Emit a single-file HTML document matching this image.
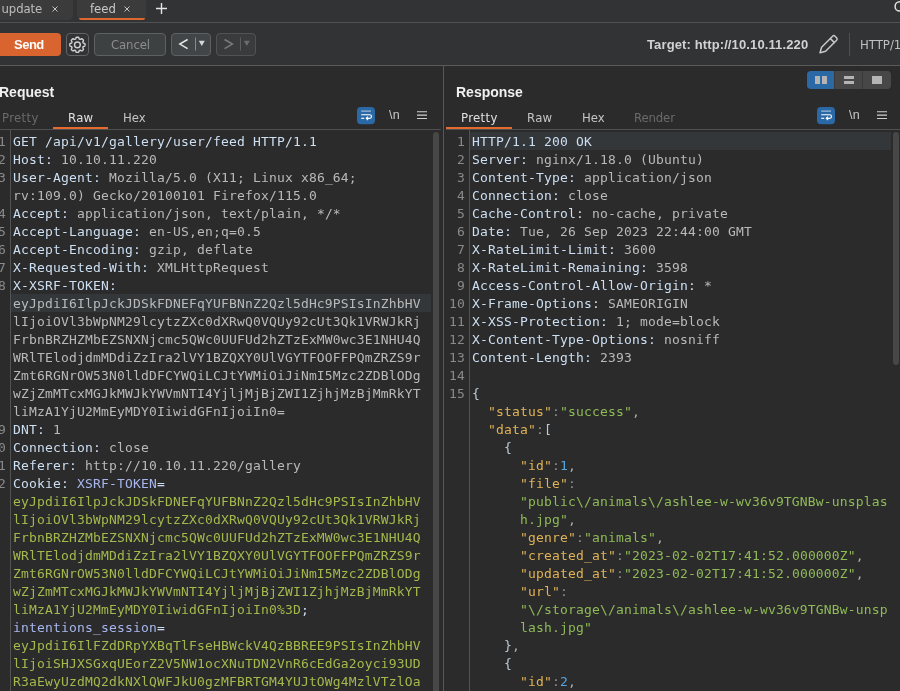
<!DOCTYPE html>
<html lang="en">
<head>
<meta charset="utf-8">
<title>Burp Suite Repeater</title>
<style>
*{box-sizing:border-box;margin:0;padding:0}
html,body{width:900px;height:691px;overflow:hidden;background:#2b2b2b}
#root{position:absolute;left:0;top:0;width:900px;height:691px;will-change:transform;overflow:hidden}
body{position:relative;font-family:"DejaVu Sans Condensed","Liberation Sans",sans-serif;font-size:13px;color:#d6d6d6}
.abs{position:absolute}
.b{font-family:"Liberation Sans",sans-serif;font-weight:bold}
#tabbar{left:0;top:0;width:900px;height:22px;background:#323334}
.tab{top:-4px;height:24px;background:#3b3b3c;border-radius:5px}
#tabline{left:0;top:22px;width:900px;height:1px;background:#515151}
#toolbar{left:0;top:23px;width:900px;height:42px;background:#323334}
#toolline{left:0;top:65px;width:900px;height:1px;background:#5a5a5a}
.t{position:absolute;white-space:pre;line-height:16px}
.btn{position:absolute;top:33px;height:23px;border:1px solid #5e6162;border-radius:4px;background:#3e4142}
#send{left:-4px;top:33px;width:65px;height:23px;background:#d9642f;border-radius:4px}
.ed{position:absolute;top:130px;bottom:0;background:#2b2b2b;overflow:hidden;font-family:"DejaVu Sans Mono","Liberation Mono",monospace;font-size:13px;letter-spacing:0.17px;line-height:18px;white-space:pre}
.ln{position:absolute;top:3px;color:#8a8a8a;text-align:right}
.tx{position:absolute;top:3px}
.hl{position:absolute;height:18px;background:#33373a}
.gl{position:absolute;top:0;bottom:0;width:1px;background:#535353}
.sb{position:absolute;width:6px;border-radius:3px;background:#474747}
.h{color:#cddff2}.v{color:#b9b9b9}.p{color:#a7b6ee}.g{color:#a3b94d}
.k{color:#dfb257}.s{color:#8fba58}.n{color:#58a6e0}.pu{color:#bccad8}.c{color:#8e8e8e}.cm{color:#adadad}
</style>
</head>
<body>
<div id="root">
<!-- top tab bar -->
<div class="abs" id="tabbar"></div>
<div class="abs" id="tabline"></div>
<div class="abs" id="toolbar"></div>
<div class="abs" id="toolline"></div>
<div class="abs tab" style="left:-4px;width:77px"></div>
<div class="t" style="left:1.5px;top:1px;color:#bdbdbd;letter-spacing:-0.1px">update</div>
<svg class="abs" style="left:51px;top:5px" width="8" height="8" viewBox="0 0 8 8"><path d="M1.5 1.5 L6.5 6.5 M6.5 1.5 L1.5 6.5" stroke="#c4c4c4" stroke-width="1" fill="none"/></svg>
<div class="abs tab" style="left:77px;width:69px"></div>
<div class="abs" style="left:79px;top:18px;width:66px;height:2px;background:#e0672f;border-radius:0 0 2px 2px"></div>
<div class="t" style="left:90px;top:1px;color:#c8c8c8">feed</div>
<svg class="abs" style="left:123px;top:5px" width="8" height="8" viewBox="0 0 8 8"><path d="M1.5 1.5 L6.5 6.5 M6.5 1.5 L1.5 6.5" stroke="#c4c4c4" stroke-width="1" fill="none"/></svg>
<svg class="abs" style="left:155px;top:2px" width="13" height="13" viewBox="0 0 13 13"><path d="M6.5 1 V12 M1 6.5 H12" stroke="#e4e4e4" stroke-width="1.4" fill="none"/></svg>
<svg class="abs" style="left:886px;top:0px" width="14" height="16" viewBox="0 0 14 16"><circle cx="13.7" cy="6.4" r="4.6" stroke="#e0e0e0" stroke-width="1.5" fill="none"/></svg>

<!-- toolbar -->
<div class="abs" id="send"></div>
<div class="t b" style="left:14px;top:37px;color:#fff;font-size:13px;letter-spacing:-0.5px">Send</div>
<div class="btn" style="left:66px;width:23px;background:transparent;border-color:#636363"></div>
<svg class="abs" style="left:68px;top:35px" width="19" height="19" viewBox="0 0 19 19"><g fill="none" stroke="#d2d2d2" stroke-width="1.45" stroke-linejoin="round"><circle cx="9.4" cy="9.8" r="2.9"/><path d="M17.00 9.80 L16.99 10.10 L16.97 10.40 L16.91 10.69 L16.79 10.97 L16.47 11.21 L15.91 11.36 L15.45 11.51 L15.22 11.69 L15.09 11.90 L14.99 12.12 L14.91 12.34 L14.85 12.58 L14.89 12.87 L15.11 13.30 L15.39 13.80 L15.45 14.20 L15.34 14.48 L15.17 14.73 L14.98 14.96 L14.77 15.17 L14.56 15.38 L14.33 15.57 L14.08 15.74 L13.80 15.85 L13.40 15.79 L12.90 15.51 L12.47 15.29 L12.18 15.25 L11.94 15.31 L11.72 15.39 L11.50 15.49 L11.29 15.62 L11.11 15.85 L10.96 16.31 L10.81 16.87 L10.57 17.19 L10.29 17.31 L10.00 17.37 L9.70 17.39 L9.40 17.40 L9.10 17.39 L8.80 17.37 L8.51 17.31 L8.23 17.19 L7.99 16.87 L7.84 16.31 L7.69 15.85 L7.51 15.62 L7.30 15.49 L7.08 15.39 L6.86 15.31 L6.62 15.25 L6.33 15.29 L5.90 15.51 L5.40 15.79 L5.00 15.85 L4.72 15.74 L4.47 15.57 L4.24 15.38 L4.03 15.17 L3.82 14.96 L3.63 14.73 L3.46 14.48 L3.35 14.20 L3.41 13.80 L3.69 13.30 L3.91 12.87 L3.95 12.58 L3.89 12.34 L3.81 12.12 L3.71 11.90 L3.58 11.69 L3.35 11.51 L2.89 11.36 L2.33 11.21 L2.01 10.97 L1.89 10.69 L1.83 10.40 L1.81 10.10 L1.80 9.80 L1.81 9.50 L1.83 9.20 L1.89 8.91 L2.01 8.63 L2.33 8.39 L2.89 8.24 L3.35 8.09 L3.58 7.91 L3.71 7.70 L3.81 7.48 L3.89 7.26 L3.95 7.02 L3.91 6.73 L3.69 6.30 L3.41 5.80 L3.35 5.40 L3.46 5.12 L3.63 4.87 L3.82 4.64 L4.03 4.43 L4.24 4.22 L4.47 4.03 L4.72 3.86 L5.00 3.75 L5.40 3.81 L5.90 4.09 L6.33 4.31 L6.62 4.35 L6.86 4.29 L7.08 4.21 L7.30 4.11 L7.51 3.98 L7.69 3.75 L7.84 3.29 L7.99 2.73 L8.23 2.41 L8.51 2.29 L8.80 2.23 L9.10 2.21 L9.40 2.20 L9.70 2.21 L10.00 2.23 L10.29 2.29 L10.57 2.41 L10.81 2.73 L10.96 3.29 L11.11 3.75 L11.29 3.98 L11.50 4.11 L11.72 4.21 L11.94 4.29 L12.18 4.35 L12.47 4.31 L12.90 4.09 L13.40 3.81 L13.80 3.75 L14.08 3.86 L14.33 4.03 L14.56 4.22 L14.77 4.43 L14.98 4.64 L15.17 4.87 L15.34 5.12 L15.45 5.40 L15.39 5.80 L15.11 6.30 L14.89 6.73 L14.85 7.02 L14.91 7.26 L14.99 7.48 L15.09 7.70 L15.22 7.91 L15.45 8.09 L15.91 8.24 L16.47 8.39 L16.79 8.63 L16.91 8.91 L16.97 9.20 L16.99 9.50 Z"/></g></svg>
<div class="btn" style="left:94px;width:72px"></div>
<div class="t" style="left:111px;top:37px;color:#8c8c8c;letter-spacing:-0.12px">Cancel</div>
<div class="btn" style="left:171px;width:40px;background:#424547"></div>
<svg class="abs" style="left:171px;top:33px" width="40" height="23" viewBox="0 0 40 23"><path d="M16.6 6.5 L8.8 11.1 L16.6 15.7" stroke="#e6e6e6" stroke-width="1.5" fill="none"/><path d="M24.5 4.5 V17.5" stroke="#8a8a8a" stroke-width="1"/><path d="M27.8 7.7 H33.8 L30.8 12.9 Z" fill="#d6d6d6"/></svg>
<div class="btn" style="left:216px;width:40px;background:#393b3d;border-color:#505355"></div>
<svg class="abs" style="left:216px;top:33px" width="40" height="23" viewBox="0 0 40 23"><path d="M8.6 6.5 L16.4 11.1 L8.6 15.7" stroke="#7c7c7c" stroke-width="1.5" fill="none"/><path d="M24.5 4.5 V17.5" stroke="#5e5e5e" stroke-width="1"/><path d="M27.8 7.7 H33.8 L30.8 12.9 Z" fill="#6c6c6c"/></svg>
<div class="t b" style="left:647px;top:37px;color:#d2d2d2;letter-spacing:0.12px">Target: http://10.10.11.220</div>
<svg class="abs" style="left:817px;top:33px" width="23" height="23" viewBox="0 0 23 23"><g fill="none" stroke="#c8c8c8" stroke-width="1.5" stroke-linejoin="round" stroke-linecap="round"><path d="M3 19.8 L4.6 14.2 L15.6 3.2 Q16.8 2 18 3.2 L19.6 4.8 Q20.8 6 19.6 7.2 L8.6 18.2 Z"/><path d="M13.4 5.6 L17.2 9.4"/></g></svg>
<div class="abs" style="left:849px;top:33px;width:1px;height:23px;background:#505050"></div>
<div class="t" style="left:860px;top:37px;color:#c0c0c0">HTTP/1</div>

<!-- panel headers -->
<div class="abs" style="left:443px;top:66px;width:1px;height:625px;background:#585858"></div>
<div class="t b" style="left:-1px;top:84px;font-size:14px;color:#f0f0f0">Request</div>
<div class="t b" style="left:456px;top:84px;font-size:14px;color:#f0f0f0">Response</div>
<div class="t" style="left:2px;top:110px;color:#6a6a6a;letter-spacing:0.35px">Pretty</div>
<div class="t" style="left:68px;top:110px;color:#e0e0e0;letter-spacing:0.3px">Raw</div>
<div class="t" style="left:123px;top:110px;color:#c4c4c4">Hex</div>
<div class="abs" style="left:53px;top:127px;width:55px;height:2px;background:#e46a2e"></div>
<div class="abs" style="left:0;top:129px;width:441px;height:1px;background:#505050"></div>
<div class="t" style="left:461px;top:110px;color:#e0e0e0;letter-spacing:0.35px">Pretty</div>
<div class="t" style="left:527px;top:110px;color:#c4c4c4;letter-spacing:0.3px">Raw</div>
<div class="t" style="left:582px;top:110px;color:#c4c4c4">Hex</div>
<div class="t" style="left:634px;top:110px;color:#6a6a6a;letter-spacing:-0.12px">Render</div>
<div class="abs" style="left:446px;top:127px;width:66px;height:2px;background:#e46a2e"></div>
<div class="abs" style="left:446px;top:129px;width:454px;height:1px;background:#505050"></div>

<!-- view toggle -->
<div class="abs" style="left:807px;top:71px;width:84px;height:18px;border-radius:4px;background:#3a3a3a;overflow:hidden">
<div class="abs" style="left:0;top:0;width:27px;height:18px;background:#2b68a6"></div>
<div class="abs" style="left:28px;top:0;width:27px;height:18px;background:#474747"></div>
<div class="abs" style="left:56px;top:0;width:28px;height:18px;background:#474747"></div>
<div class="abs" style="left:8px;top:5px;width:5px;height:8px;background:#b4b4b4"></div>
<div class="abs" style="left:15px;top:5px;width:5px;height:8px;background:#b4b4b4"></div>
<div class="abs" style="left:37px;top:5px;width:10px;height:3px;background:#b4b4b4"></div>
<div class="abs" style="left:37px;top:10px;width:10px;height:3px;background:#b4b4b4"></div>
<div class="abs" style="left:65px;top:5px;width:10px;height:8px;background:#b4b4b4"></div>
</div>

<!-- editor toolbar icons: request -->
<svg class="abs" style="left:357px;top:107px" width="18" height="18" viewBox="0 0 18 18"><rect x="0" y="0" width="18" height="17.3" rx="4" fill="#2b68a6"/><g fill="none" stroke-width="1.15"><path d="M4.2 4.1 H14" stroke="#a9c3de"/><path d="M4.2 7.7 H12.6 Q14.5 7.7 14.5 9.5 Q14.5 11.3 12.6 11.3 H9.6" stroke="#fff"/><path d="M11 9.6 L9.3 11.3 L11 13" stroke="#fff"/><path d="M4.2 11.3 H7.2" stroke="#fff"/></g></svg>
<div class="t" style="left:389px;top:107px;color:#c8c8c8;font-size:12.5px;font-family:'Liberation Sans',sans-serif;letter-spacing:0.3px">\n</div>
<svg class="abs" style="left:417px;top:110px" width="10" height="10" viewBox="0 0 10 10"><path d="M0 1.7 H10 M0 5.1 H10 M0 8.5 H10" stroke="#cfcfcf" stroke-width="1.15"/></svg>
<!-- editor toolbar icons: response -->
<svg class="abs" style="left:817px;top:107px" width="18" height="18" viewBox="0 0 18 18"><rect x="0" y="0" width="18" height="17.3" rx="4" fill="#2b68a6"/><g fill="none" stroke-width="1.15"><path d="M4.2 4.1 H14" stroke="#a9c3de"/><path d="M4.2 7.7 H12.6 Q14.5 7.7 14.5 9.5 Q14.5 11.3 12.6 11.3 H9.6" stroke="#fff"/><path d="M11 9.6 L9.3 11.3 L11 13" stroke="#fff"/><path d="M4.2 11.3 H7.2" stroke="#fff"/></g></svg>
<div class="t" style="left:849px;top:107px;color:#c8c8c8;font-size:12.5px;font-family:'Liberation Sans',sans-serif;letter-spacing:0.3px">\n</div>
<svg class="abs" style="left:877px;top:110px" width="10" height="10" viewBox="0 0 10 10"><path d="M0 1.7 H10 M0 5.1 H10 M0 8.5 H10" stroke="#cfcfcf" stroke-width="1.15"/></svg>

<!-- REQUEST EDITOR -->
<div class="ed" id="req" style="left:0;width:441px">
<div class="hl" style="left:11px;width:420px;top:164px"></div>
<div class="gl" style="left:10px"></div>
<div class="sb" style="left:433px;top:2px;height:570px"></div>
<div class="ln" style="left:-16px;width:22px">1
2
3

4
5
6
7
8







9
10
11
12</div>
<div class="tx" style="left:13px" id="reqtx"><span class="h">GET /api/v1/gallery/user/feed HTTP/1.1</span>
<span class="h">Host:</span><span class="v"> 10.10.11.220</span>
<span class="h">User-Agent:</span><span class="v"> Mozilla/5.0 (X11; Linux x86_64;
rv:109.0) Gecko/20100101 Firefox/115.0</span>
<span class="h">Accept:</span><span class="v"> application/json, text/plain, */*</span>
<span class="h">Accept-Language:</span><span class="v"> en-US,en;q=0.5</span>
<span class="h">Accept-Encoding:</span><span class="v"> gzip, deflate</span>
<span class="h">X-Requested-With:</span><span class="v"> XMLHttpRequest</span>
<span class="h">X-XSRF-TOKEN:</span>
<span class="v">eyJpdiI6IlpJckJDSkFDNEFqYUFBNnZ2Qzl5dHc9PSIsInZhbHV
lIjoiOVl3bWpNM29lcytzZXc0dXRwQ0VQUy92cUt3Qk1VRWJkRj
FrbnBRZHZMbEZSNXNjcmc5QWc0UUFUd2hZTzExMW0wc3E1NHU4Q
WRlTElodjdmMDdiZzIra2lVY1BZQXY0UlVGYTFOOFFPQmZRZS9r
Zmt6RGNrOW53N0lldDFCYWQiLCJtYWMiOiJiNmI5Mzc2ZDBlODg
wZjZmMTcxMGJkMWJkYWVmNTI4YjljMjBjZWI1ZjhjMzBjMmRkYT
liMzA1YjU2MmEyMDY0IiwidGFnIjoiIn0=</span>
<span class="h">DNT:</span><span class="v"> 1</span>
<span class="h">Connection:</span><span class="v"> close</span>
<span class="h">Referer:</span><span class="v"> http://10.10.11.220/gallery</span>
<span class="h">Cookie:</span> <span class="p">XSRF-TOKEN</span><span class="h">=</span>
<span class="g">eyJpdiI6IlpJckJDSkFDNEFqYUFBNnZ2Qzl5dHc9PSIsInZhbHV
lIjoiOVl3bWpNM29lcytzZXc0dXRwQ0VQUy92cUt3Qk1VRWJkRj
FrbnBRZHZMbEZSNXNjcmc5QWc0UUFUd2hZTzExMW0wc3E1NHU4Q
WRlTElodjdmMDdiZzIra2lVY1BZQXY0UlVGYTFOOFFPQmZRZS9r
Zmt6RGNrOW53N0lldDFCYWQiLCJtYWMiOiJiNmI5Mzc2ZDBlODg
wZjZmMTcxMGJkMWJkYWVmNTI4YjljMjBjZWI1ZjhjMzBjMmRkYT
liMzA1YjU2MmEyMDY0IiwidGFnIjoiIn0%3D</span><span class="h">;</span>
<span class="p">intentions_session</span><span class="h">=</span>
<span class="g">eyJpdiI6IlFZdDRpYXBqTlFseHBWckV4QzBBREE9PSIsInZhbHV
lIjoiSHJXSGxqUEorZ2V5NW1ocXNuTDN2VnR6cEdGa2oyci93UD
R3aEwyUzdMQ2dkNXlQWFJkU0gzMFBRTGM4YUJtOWg4MzlVTzlOa</span></div>
</div>

<!-- RESPONSE EDITOR -->
<div class="ed" id="res" style="left:446px;width:454px">
<div class="hl" style="left:24px;width:421px;top:2px"></div>
<div class="gl" style="left:23px"></div>
<div class="sb" style="left:447px;top:2px;height:233px"></div>
<div class="ln" style="left:-3px;width:22px">1
2
3
4
5
6
7
8
9
10
11
12
13
14
15</div>
<div class="tx" style="left:26px" id="restx"><span class="h">HTTP/1.1 200 OK</span>
<span class="h">Server:</span><span class="v"> nginx/1.18.0 (Ubuntu)</span>
<span class="h">Content-Type:</span><span class="v"> application/json</span>
<span class="h">Connection:</span><span class="v"> close</span>
<span class="h">Cache-Control:</span><span class="v"> no-cache, private</span>
<span class="h">Date:</span><span class="v"> Tue, 26 Sep 2023 22:44:00 GMT</span>
<span class="h">X-RateLimit-Limit:</span><span class="v"> 3600</span>
<span class="h">X-RateLimit-Remaining:</span><span class="v"> 3598</span>
<span class="h">Access-Control-Allow-Origin:</span><span class="v"> *</span>
<span class="h">X-Frame-Options:</span><span class="v"> SAMEORIGIN</span>
<span class="h">X-XSS-Protection:</span><span class="v"> 1; mode=block</span>
<span class="h">X-Content-Type-Options:</span><span class="v"> nosniff</span>
<span class="h">Content-Length:</span><span class="v"> 2393</span>

<span class="pu">{</span>
  <span class="k">"status"</span><span class="c">:</span><span class="s">"success"</span><span class="cm">,</span>
  <span class="k">"data"</span><span class="c">:</span><span class="pu">[</span>
    <span class="pu">{</span>
      <span class="k">"id"</span><span class="c">:</span><span class="n">1</span><span class="cm">,</span>
      <span class="k">"file"</span><span class="c">:</span>
      <span class="s">"public\/animals\/ashlee-w-wv36v9TGNBw-unsplas
      h.jpg"</span><span class="cm">,</span>
      <span class="k">"genre"</span><span class="c">:</span><span class="s">"animals"</span><span class="cm">,</span>
      <span class="k">"created_at"</span><span class="c">:</span><span class="s">"2023-02-02T17:41:52.000000Z"</span><span class="cm">,</span>
      <span class="k">"updated_at"</span><span class="c">:</span><span class="s">"2023-02-02T17:41:52.000000Z"</span><span class="cm">,</span>
      <span class="k">"url"</span><span class="c">:</span>
      <span class="s">"\/storage\/animals\/ashlee-w-wv36v9TGNBw-unsp
      lash.jpg"</span>
    <span class="pu">}</span><span class="cm">,</span>
    <span class="pu">{</span>
      <span class="k">"id"</span><span class="c">:</span><span class="n">2</span><span class="cm">,</span></div>
</div>
</div>
</body>
</html>
